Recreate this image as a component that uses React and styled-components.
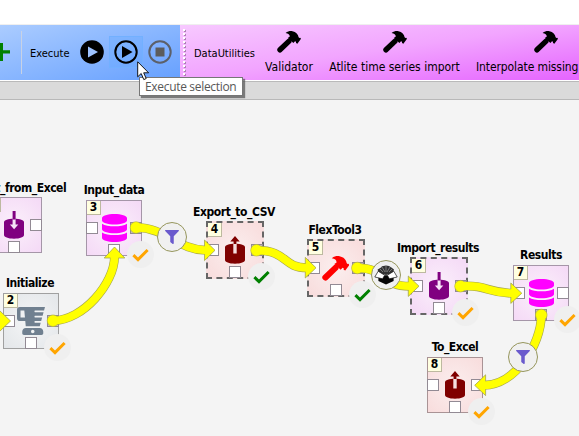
import React from "react";
import styled, { createGlobalStyle } from "styled-components";
import { FaDatabase, FaFilter, FaBlender } from "react-icons/fa";

const GlobalStyle = createGlobalStyle`
  * { box-sizing: border-box; }
  body { margin: 0; overflow: hidden; background: #fff; }
`;

const Window = styled.div`
  position: relative;
  width: 579px;
  height: 436px;
  padding-top: 25px;
  overflow: hidden;
  background: #fff;
  font-family: "DejaVu Sans Condensed", "DejaVu Sans", sans-serif;
  font-stretch: condensed;
  color: #000;
`;

const Toolbars = styled.div`
  display: flex;
  height: 55px;
  box-shadow: 0 -1px 0 #efefef;
`;

const ExecuteBar = styled.div`
  width: 180px;
  display: flex;
  align-items: center;
  background: linear-gradient(163deg, #abccff 0%, #66a0ff 100%);
`;

const PlusIcon = styled.svg`
  width: 10px;
  height: 20px;
  margin-top: -1px;
  flex: none;
`;

const Separator = styled.div`
  width: 1px;
  height: 43px;
  margin-left: 11px;
  background: #c8d2e4;
`;

const BarLabel = styled.span`
  width: ${(p) => p.$width}px;
  margin-left: ${(p) => p.$gap}px;
  margin-top: 1px;
  font-size: 11px;
  letter-spacing: ${(p) => p.$spacing || 0}px;
  white-space: nowrap;
`;

const RoundButton = styled.button`
  width: 34px;
  height: 32px;
  padding: 0;
  margin-top: -1px;
  display: grid;
  place-items: center;
  flex: none;
  border: 1px solid ${(p) => (p.$hover ? "#72b0ff" : "transparent")};
  background: ${(p) => (p.$hover ? "rgba(100, 170, 255, 0.35)" : "transparent")};
`;

const UtilitiesBar = styled.div`
  flex: 1;
  min-width: 0;
  display: flex;
  align-items: center;
  overflow: hidden;
  background: linear-gradient(172deg, #f7c9ff 0%, #f2a5ff 48%, #e564ff 100%);
`;

const Grip = styled.div`
  width: 3px;
  height: 47px;
  margin-left: 3px;
  flex: none;
  background:
    radial-gradient(circle at 1px 1px, #fff 1px, transparent 1.2px) 0 0 / 3px 4px,
    radial-gradient(circle at 2px 2px, #ab83b3 1px, transparent 1.2px) 0 0 / 3px 4px;
`;

const Tool = styled.div`
  width: ${(p) => p.$width}px;
  margin-left: ${(p) => p.$gap}px;
  height: 55px;
  padding-top: 6px;
  flex: none;
  display: flex;
  flex-direction: column;
  align-items: center;
  gap: 4px;
  font-size: 12px;
  line-height: 16px;
  letter-spacing: ${(p) => p.$spacing || 0}px;
  white-space: nowrap;
`;

const ToolName = styled.span`
  align-self: ${(p) => (p.$start ? "flex-start" : "center")};
`;

const Strip = styled.div`
  height: 20px;
  border-top: 1px solid #fff;
  border-bottom: 1px solid #b8b8b8;
  background: linear-gradient(#b9b9b9 0 1px, #dadada 1px);
`;

const Canvas = styled.div`
  position: relative;
  height: 336px;
  background: #f4f4f4;
`;

const palettes = {
  store: { border: "#a596a8", from: "#fbf0fb", to: "#f4d9f6" },
  export: { border: "#a99395", from: "#fbeeee", to: "#f8dcdc" },
  mixer: { border: "#a0a0a0", from: "#f5f6f7", to: "#e3e6e9" },
};

const NodeBox = styled.div`
  position: absolute;
  left: ${(p) => p.$x}px;
  top: ${(p) => p.$y}px;
  width: ${(p) => (p.$selected ? 58 : 56)}px;
  height: ${(p) => (p.$selected ? 58 : 56)}px;
  border: ${(p) => (p.$selected ? "2px dashed #666" : `1px solid ${palettes[p.$kind].border}`)};
  background: radial-gradient(
    circle,
    ${(p) => palettes[p.$kind].from},
    ${(p) => palettes[p.$kind].to}
  );
  outline: ${(p) => (p.$selected ? "none" : `0.5px solid ${palettes[p.$kind].border}`)};
  outline-offset: -1.5px;
`;

const NodeName = styled.div`
  position: absolute;
  left: 50%;
  bottom: calc(100% + ${(p) => p.$lift ?? 3}px);
  transform: translateX(calc(-50% + ${(p) => p.$shift || 0}px));
  font-size: 12px;
  line-height: 16px;
  font-weight: 700;
  letter-spacing: -0.45px;
  white-space: nowrap;
`;

const portSpots = {
  left: "left: -1px; top: 21px;",
  right: "right: -1px; top: 21px;",
  bottom: "left: 21px; bottom: -1px;",
};

const Port = styled.div`
  position: absolute;
  ${(p) => portSpots[p.$side]}
  width: 12px;
  height: 12px;
  border: 1px solid #928a94;
  background: ${(p) => (p.$filled ? "#c9bdb5" : "#fff")};
`;

const Order = styled.div`
  position: absolute;
  left: 0;
  top: 0;
  width: 14px;
  height: 14px;
  background: #ffffe0;
  border-right: 1px solid #bdb9a0;
  border-bottom: 1px solid #bdb9a0;
  font-size: 12px;
  line-height: 13px;
  font-weight: 700;
  text-align: center;
`;

const Glyph = styled.div`
  position: absolute;
  left: ${(p) => p.$left}px;
  top: ${(p) => p.$top}px;
  line-height: 0;
  color: ${(p) => p.$color};
`;

const Status = styled.div`
  position: absolute;
  right: -13px;
  bottom: -13px;
  width: 27px;
  height: 27px;
  border-radius: 50%;
  display: grid;
  place-items: center;
  background: #efefef;
`;

const Wires = styled.svg`
  position: absolute;
  left: 0;
  top: 0;
`;

const LinkBadge = styled.div`
  position: absolute;
  left: ${(p) => p.$x - 15}px;
  top: ${(p) => p.$y - 15}px;
  width: 30px;
  height: 30px;
  border: 1px solid #96965c;
  border-radius: 50%;
  display: grid;
  place-items: center;
  background: #f0f0f0;
  color: #6a5acd;
`;

const Tooltip = styled.div`
  position: absolute;
  left: 139px;
  top: 77px;
  width: 104px;
  height: 19px;
  padding-left: 5px;
  border: 1px solid #767676;
  background: #fff;
  box-shadow: 2px 2px 1px rgba(70, 70, 70, 0.65);
  font-family: "Open Sans", "Noto Sans", sans-serif;
  font-stretch: normal;
  font-size: 12px;
  line-height: 17px;
  letter-spacing: -0.32px;
  color: #575757;
  white-space: nowrap;
`;

const Pointer = styled.svg`
  position: absolute;
  left: 137px;
  top: 61px;
`;

function HammerIcon({ scale = 1 }) {
  return (
    <svg width={24 * scale} height={24 * scale} viewBox="0 0 24 24">
      <path d="M3 18.8L11.8 10.4" fill="none" stroke="currentColor" strokeWidth="5.4" strokeLinecap="round" />
      <path
        d="M8.6 1.9C11 0.2 13 -0.1 15.4 0.2C19 0.9 21.3 3.2 21.6 6.2L22.4 7L23.2 6.7L24 7.8L20.4 12.8L19 12V10.8L18 10.2L16.4 12L10.8 7L12.8 5.6C12.8 3.2 11.2 2.4 8.6 1.9Z"
        fill="currentColor"
      />
    </svg>
  );
}

function CheckMark({ color }) {
  return (
    <svg width="17" height="14" viewBox="0 0 17 14">
      <path d="M1.4 7.2L6 11.6L15.6 2" fill="none" stroke={color} strokeWidth="3" />
    </svg>
  );
}

function CylinderArrow({ up }) {
  return (
    <svg width="20" height="28" viewBox="0 0 20 28">
      <path d="M0 11C0 9.3 4 7.7 10 7.7S20 9.3 20 11V24C20 26 16 27.7 10 27.7S0 26 0 24Z" fill="currentColor" />
      {up ? (
        <>
          <path d="M8.3 17.5V5H11.7V17.5Z" fill="#f5dfe0" />
          <path d="M8.6 8V5.5H5.3L10 0L14.7 5.5H11.4V8Z" fill="currentColor" />
        </>
      ) : (
        <>
          <path d="M8.6 7.5H11.6V13.5H14.3L10.1 18.3L5.9 13.5H8.6Z" fill="#f6e2f7" />
          <path d="M8.6 0H11.6V8.5H8.6Z" fill="currentColor" />
        </>
      )}
    </svg>
  );
}

function PackageIcon() {
  return (
    <svg width="24" height="22" viewBox="0 0 24 22">
      <path d="M4.5 9L3.6 5.6L7 3.6L8 2.2L12 1.4L15 2L17.4 3.4L20 5.4L19 9L12 11Z" fill="#333" />
      <path d="M6 5L9 8M8 3L11 8M12 2V8M16 3L13 8M18 5L15 8" fill="none" stroke="#aaa" strokeWidth="0.6" />
      <path d="M4.4 11V17L12 20.5L19.6 17V11L15 12.4L12 11L9 12.4Z" fill="#050505" />
      <path d="M4.2 7.2L10.6 11.2L8.6 14.8L0.8 13Z" fill="#fff" stroke="#111" strokeWidth="0.7" />
      <path d="M19.8 7.2L13.4 11.2L15.4 14.8L23.2 13Z" fill="#fff" stroke="#111" strokeWidth="0.7" />
    </svg>
  );
}

const DatabaseIcon = styled(FaDatabase).attrs({ preserveAspectRatio: "none" })`
  width: 25px;
  height: 28px;
`;

const glyphs = {
  database: { left: 15, top: 13, color: "#f0f", icon: <DatabaseIcon /> },
  importer: { left: 17, top: 13, color: "#800080", icon: <CylinderArrow /> },
  exporter: { left: 17, top: 13, color: "#800000", icon: <CylinderArrow up /> },
  hammer: { left: 13, top: 15, color: "#f00", icon: <HammerIcon scale={1.14} /> },
  blender: { left: 13, top: 13, color: "#708090", icon: <FaBlender size={28} /> },
};

const nodes = [
  { name: "Import_from_Excel", x: -14, y: 197, kind: "store", glyph: "importer", order: "1", lift: 2 },
  { name: "Input_data", x: 86, y: 200, kind: "store", glyph: "database", order: "3", status: "#ffa500", used: ["right"] },
  { name: "Initialize", x: 3, y: 293, kind: "mixer", glyph: "blender", order: "2", status: "#ffa500", used: ["right"], shift: -1 },
  { name: "Export_to_CSV", x: 206, y: 221, kind: "export", glyph: "exporter", order: "4", status: "#008000", selected: true, used: ["right"], shift: -1 },
  { name: "FlexTool3", x: 307, y: 239, kind: "export", glyph: "hammer", order: "5", status: "#008000", selected: true, used: ["right"], shift: -1 },
  { name: "Import_results", x: 410, y: 257, kind: "store", glyph: "importer", order: "6", status: "#ffa500", selected: true, used: ["right"], shift: -1 },
  { name: "Results", x: 513, y: 265, kind: "store", glyph: "database", order: "7", status: "#ffa500", used: ["bottom"] },
  { name: "To_Excel", x: 427, y: 357, kind: "export", glyph: "exporter", order: "8", status: "#ffa500" },
];

const wires = [
  { d: "M136 227.5C166 227.5 178 250 206 250.3", start: [136, 227.5], head: "215,250.3 204.5,240 204.5,260.6" },
  { d: "M256.5 250.3C288 250.3 282 267.8 307 267.8", start: [256.5, 250.3], head: "316,267.8 305.3,257.4 305.3,278" },
  { d: "M357.3 268C387 268 380 286 410 286.2", start: [357.3, 268], head: "419,286.2 408.3,276 408.3,296.4" },
  { d: "M460.5 286.2C488 284.5 487 293.2 513 293.2", start: [460.5, 286.2], head: "521.8,293.2 510.8,283 510.8,303.4" },
  { d: "M541.3 315C541.3 345 515 385 484 385.3", start: [541.3, 315], head: "474.7,385.3 485.6,374.8 485.6,395.6" },
  { d: "M53 320.7C83 320.7 114.5 283 114.5 257", start: [53, 320.7], head: "114.5,247 104.2,258 124.8,258" },
  { d: "M-10 321L2 321", start: [-10, 321], head: "10.5,321 -0.5,310.5 -0.5,331.5" },
];

function ProjectNode({ name, x, y, kind, glyph, order, status, selected, used = [], shift, lift }) {
  const art = glyphs[glyph];
  return (
    <NodeBox $x={x} $y={y - 100} $kind={kind} $selected={selected}>
      <NodeName $shift={shift} $lift={lift}>{name}</NodeName>
      <Glyph $left={art.left} $top={art.top} $color={art.color}>{art.icon}</Glyph>
      {["left", "right", "bottom"].map((side) => (
        <Port key={side} $side={side} $filled={used.includes(side)} />
      ))}
      <Order>{order}</Order>
      {status && <Status><CheckMark color={status} /></Status>}
    </NodeBox>
  );
}

export default function App() {
  return (
    <Window>
      <GlobalStyle />
      <Toolbars>
        <ExecuteBar>
          <PlusIcon viewBox="0 0 10 20"><path d="M0 8.2V1H3V8.2H10V11.6H3V19H0Z" fill="#008000" /></PlusIcon>
          <Separator />
          <BarLabel $gap={8} $width={45}>Execute</BarLabel>
          <RoundButton>
            <svg width="24" height="24" viewBox="0 0 24 24">
              <circle cx="12" cy="12" r="11.8" />
              <path d="M8 6.5V17.5L18 12Z" fill="#9ec3ff" />
            </svg>
          </RoundButton>
          <RoundButton $hover>
            <svg width="24" height="24" viewBox="0 0 24 24">
              <circle cx="12" cy="12" r="10.7" fill="none" stroke="#000" strokeWidth="2" />
              <path d="M8 6V18L18.5 12Z" />
            </svg>
          </RoundButton>
          <RoundButton>
            <svg width="24" height="24" viewBox="0 0 24 24">
              <circle cx="12" cy="12" r="10.7" fill="none" stroke="#5c6069" strokeWidth="2" />
              <path d="M7.5 7.5H16.5V16.5H7.5Z" fill="#5c5c5c" />
            </svg>
          </RoundButton>
        </ExecuteBar>
        <UtilitiesBar>
          <Grip />
          <BarLabel $gap={8} $width={58}>DataUtilities</BarLabel>
          <Tool $gap={13} $width={48}><HammerIcon /><ToolName>Validator</ToolName></Tool>
          <Tool $gap={16} $width={131}><HammerIcon /><ToolName>Atlite time series import</ToolName></Tool>
          <Tool $gap={16} $width={139} $spacing={-0.1}><HammerIcon /><ToolName $start>Interpolate missing values</ToolName></Tool>
        </UtilitiesBar>
      </Toolbars>
      <Strip />
      <Canvas>
        {nodes.map((node) => <ProjectNode key={node.name} {...node} />)}
        <Wires width="579" height="336" viewBox="0 100 579 336">
          {wires.map(({ d, start, head }) => (
            <g key={d}>
              <path d={d} fill="none" stroke="#a5a54e" strokeWidth="9" />
              <circle cx={start[0]} cy={start[1]} r="5.8" fill="#ff0" stroke="#b4b43c" strokeWidth="0.6" />
              <polygon points={head} fill="#ff0" stroke="#a5a54e" strokeWidth="0.8" />
              <path d={d} fill="none" stroke="#ff0" strokeWidth="7.8" />
            </g>
          ))}
        </Wires>
        <LinkBadge $x={172} $y={137}><FaFilter size={14} /></LinkBadge>
        <LinkBadge $x={386} $y={175}><PackageIcon /></LinkBadge>
        <LinkBadge $x={523} $y={257}><FaFilter size={14} /></LinkBadge>
      </Canvas>
      <Tooltip>Execute selection</Tooltip>
      <Pointer width="13" height="20" viewBox="0 0 13 20">
        <path d="M0.7 0.8V15.8L4.2 12.5L6.8 18.6L9.2 17.5L6.7 11.8H11.6Z" fill="#fff" stroke="#000" strokeWidth="0.9" />
      </Pointer>
    </Window>
  );
}
